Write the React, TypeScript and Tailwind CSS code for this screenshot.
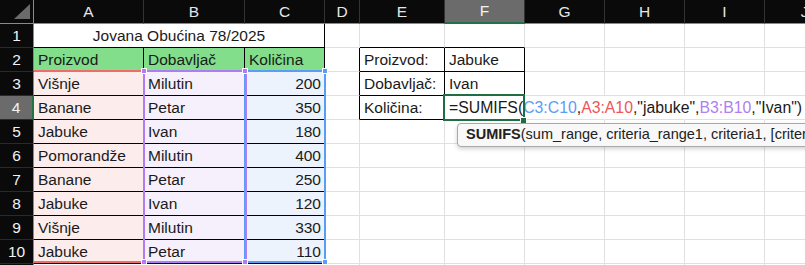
import React from "react"

const COLS = [
  { key: "A", w: "w-[110px]" },
  { key: "B", w: "w-[101px]" },
  { key: "C", w: "w-[80px]" },
  { key: "D", w: "w-[35px]" },
  { key: "E", w: "w-[85px]" },
  { key: "F", w: "w-[80px]" },
  { key: "G", w: "w-[80px]" },
  { key: "H", w: "w-[80px]" },
  { key: "I", w: "w-[80px]" },
  { key: "J", w: "w-[80px]" },
]

const DATA = [
  ["Višnje", "Milutin", "200"],
  ["Banane", "Petar", "350"],
  ["Jabuke", "Ivan", "180"],
  ["Pomorandže", "Milutin", "400"],
  ["Banane", "Petar", "250"],
  ["Jabuke", "Ivan", "120"],
  ["Višnje", "Milutin", "330"],
  ["Jabuke", "Petar", "110"],
]

function Formula() {
  return (
    <span className="text-[15.8px]">
      =SUMIFS(<span className="text-[#5b9cf5]">C3:C10</span>,
      <span className="text-[#f0555a]">A3:A10</span>,"jabuke",
      <span className="text-[#b07ef2]">B3:B10</span>,"Ivan")
    </span>
  )
}

function content(r: number, c: number): React.ReactNode {
  if (r >= 3 && r <= 10 && c <= 2) return DATA[r - 3][c]
  if (r === 2 && c <= 2) return ["Proizvod", "Dobavljač", "Količina"][c]
  if (c === 4) return r === 2 ? "Proizvod:" : r === 3 ? "Dobavljač:" : r === 4 ? "Količina:" : null
  if (c === 5) return r === 2 ? "Jabuke" : r === 3 ? "Ivan" : r === 4 ? <Formula /> : null
  return null
}

function Cell({ r, c }: { r: number; c: number }) {
  const rightBlack =
    (c <= 2 && r >= 1 && r <= 10) || (c >= 3 && c <= 5 && r >= 2 && r <= 4)
  const bottomBlack = (c <= 2 && r >= 1 && r <= 10) || ((c === 4 || c === 5) && r >= 1 && r <= 4)
  const rightWhite = r === 4 && c >= 6

  let bg = "bg-white"
  if (r === 2 && c <= 2) bg = "bg-[#82de8b]"
  else if (r >= 3 && r <= 10 && c === 0) bg = "bg-[#fdecec]"
  else if (r >= 3 && r <= 10 && c === 1) bg = "bg-[#f5f0fc]"
  else if (r >= 3 && r <= 10 && c === 2) bg = "bg-[#ecf3fd]"

  const right = rightBlack ? "border-r-black" : rightWhite ? "border-r-white" : "border-r-[#e0e0e0]"
  const bottom = bottomBlack ? "border-b-black" : "border-b-[#e0e0e0]"
  const align = r >= 3 && c === 2 ? "justify-end pr-[3px]" : "pl-[4px]"
  const over = r === 4 && c === 5 ? "relative z-10 overflow-visible" : "overflow-hidden"

  return (
    <div
      className={`flex h-full shrink-0 items-center whitespace-nowrap border-r border-b ${COLS[c].w} ${bg} ${right} ${bottom} ${align} ${over}`}
    >
      {content(r, c)}
    </div>
  )
}

function RowHead({ n }: { n: number }) {
  const sel = n === 4
  return (
    <div
      className={`flex h-full w-[34px] shrink-0 items-center justify-center border-b border-b-[#2a2a2a] text-[#f2f2f2] ${
        sel ? "border-r-2 border-r-[#217346] bg-[#6b6b6b]" : "border-r border-r-[#8a8a8a] bg-[#0a0a0a]"
      }`}
    >
      {n <= 10 ? n : null}
    </div>
  )
}

export default function App() {
  const rows = [1, 2, 3, 4, 5, 6, 7, 8, 9, 10, 11]

  return (
    <div className="relative h-[265px] w-[805px] overflow-hidden bg-white font-['Liberation_Sans',Arial,sans-serif] text-[15.5px] text-[#1a1a1a]">
      {/* column headers */}
      <div className="flex h-[24px] bg-[#0a0a0a]">
        <div className="relative h-full w-[34px] shrink-0 border-r border-b border-r-[#8a8a8a] border-b-[#8a8a8a]">
          <div className="absolute left-[14px] top-[4px] h-0 w-0 border-b-[15px] border-l-[16px] border-b-[#6b6b6b] border-l-transparent" />
        </div>
        {COLS.map((col, i) =>
          i === 5 ? (
            <div
              key={col.key}
              className={`flex h-full shrink-0 items-center justify-center border-r border-b-2 border-r-[#333] border-b-[#217346] bg-[#6b6b6b] text-[#f2f2f2] ${col.w}`}
            >
              {col.key}
            </div>
          ) : (
            <div
              key={col.key}
              className={`flex h-full shrink-0 items-center justify-center border-r border-b border-r-[#333] border-b-[#8a8a8a] text-[#e6e6e6] ${col.w}`}
            >
              {col.key}
            </div>
          )
        )}
      </div>

      {rows.map((r) => (
        <div key={r} className="flex h-[24px]">
          <RowHead n={r} />
          {r === 1 ? (
            <>
              <div className="flex h-full w-[291px] shrink-0 items-center justify-center border-r border-b border-black bg-white">
                Jovana Obućina 78/2025
              </div>
              {[3, 4, 5, 6, 7, 8, 9].map((c) => (
                <Cell key={c} r={r} c={c} />
              ))}
            </>
          ) : (
            COLS.map((_, c) => <Cell key={c} r={r} c={c} />)
          )}
        </div>
      ))}

      {/* range highlights */}
      <div className="absolute left-[34px] top-[70px] h-[193px] w-[111px] border-y-2 border-[#f26b6b]" />
      <div className="absolute left-[244px] top-[70px] h-[193px] w-[82px] border-2 border-[#5b9cf5]" />
      <div className="absolute left-[143px] top-[70px] h-[193px] w-[104px] border-2 border-[#b07cf3]" />

      <div className="absolute left-[141px] top-[68px] h-[6px] w-[6px] border border-white bg-[#b07cf3]" />
      <div className="absolute left-[242px] top-[68px] h-[6px] w-[6px] border border-white bg-[#b07cf3]" />
      <div className="absolute left-[322px] top-[68px] h-[6px] w-[6px] border border-white bg-[#5b9cf5]" />
      <div className="absolute left-[141px] top-[259px] h-[6px] w-[6px] border border-white bg-[#b07cf3]" />
      <div className="absolute left-[242px] top-[259px] h-[6px] w-[6px] border border-white bg-[#b07cf3]" />
      <div className="absolute left-[322px] top-[259px] h-[6px] w-[6px] border border-white bg-[#5b9cf5]" />

      {/* active cell */}
      <div className="absolute left-[443px] top-[94px] z-20 h-[27px] w-[82px] border-2 border-[#1f6e43]" />
      <div className="absolute left-[520px] top-[117px] z-20 h-[7px] w-[7px] border border-white bg-[#1f6e43]" />

      {/* function tooltip */}
      <div className="absolute left-[457px] top-[123px] z-30 flex h-[24px] w-[420px] items-center whitespace-nowrap rounded-[4px] border border-[#a9a9a9] bg-[#f8f8f8] pl-[8px] text-[14.5px] text-[#222] shadow-[0_2px_4px_rgba(0,0,0,0.18)]">
        <span className="font-bold">SUMIFS</span>(sum_range, criteria_range1, criteria1, [criteria_range2, criteria2], ...)
      </div>
    </div>
  )
}
